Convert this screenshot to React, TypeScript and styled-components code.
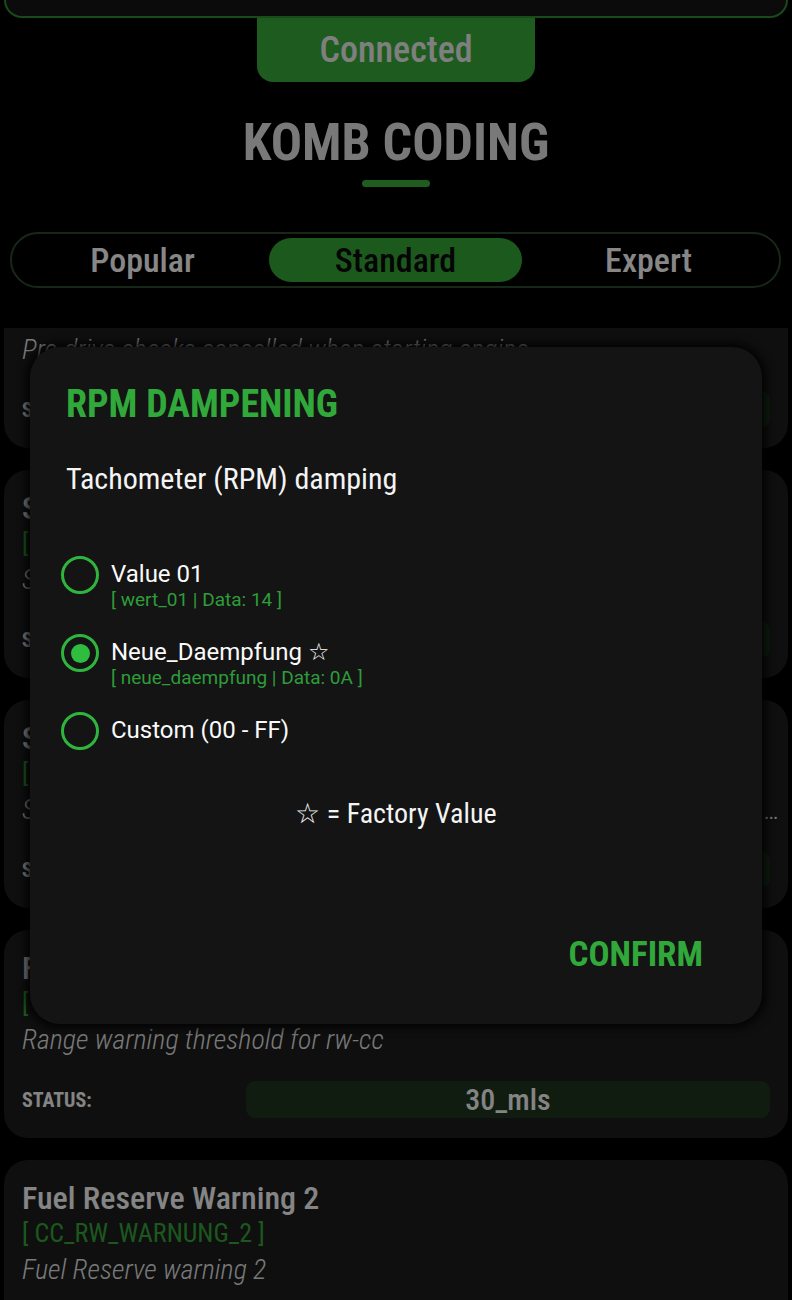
import React from 'react';
import styled, { createGlobalStyle } from 'styled-components';

const display = `Roboto, "Noto Sans", sans-serif`;
const body = `Roboto, "Noto Sans", sans-serif`;

const GlobalStyle = createGlobalStyle`
    html, body {
        margin: 0;
        padding: 0;
        background: #000;
    }
    * {
        box-sizing: border-box;
    }
`;

const Page = styled.div`
    position: relative;
    width: 792px;
    height: 1300px;
    overflow: hidden;
    background: #000;
    display: flex;
    flex-direction: column;
    font-family: ${display};
    font-stretch: condensed;
`;

const HeaderCard = styled.div`
    height: 18px;
    margin: 0 4px;
    background: #151515;
    border: 2px solid #2f872f;
    border-top: none;
    border-radius: 0 0 24px 24px;
`;

const ConnectedTab = styled.div`
    align-self: center;
    width: 278px;
    height: 64px;
    background: #36a838;
    border-radius: 0 0 16px 16px;
    display: flex;
    align-items: center;
    justify-content: center;
    color: #e8e8e8;
    font-size: 36px;
    font-weight: 500;
`;

const Title = styled.h1`
    margin: 33px 0 0;
    text-align: center;
    font-size: 52px;
    line-height: 56px;
    font-weight: 700;
    color: #dcdcdc;
`;

const TitleBar = styled.div`
    align-self: center;
    width: 68px;
    height: 7px;
    margin-top: 9px;
    border-radius: 4px;
    background: #38a83a;
`;

const Tabs = styled.div`
    margin: 45px 11px 0 10px;
    height: 56px;
    border: 2px solid #2c4a2c;
    border-radius: 28px;
    display: grid;
    grid-template-columns: 1fr 1fr 1fr;
    align-items: center;
    padding: 0 4px;
`;

const Tab = styled.div<{ active?: boolean }>`
    height: 44px;
    border-radius: 22px;
    display: flex;
    align-items: center;
    justify-content: center;
    font-size: 34px;
    font-weight: 500;
    color: ${p => (p.active ? '#0a0a0a' : '#f6f6f6')};
    background: ${p => (p.active ? '#34a236' : 'transparent')};
`;

const ListViewport = styled.div`
    margin-top: 40px;
    flex: 1;
    overflow: hidden;
`;

const ListInner = styled.div`
    margin-top: -88px;
    display: flex;
    flex-direction: column;
    gap: 22px;
`;

const Card = styled.div`
    margin: 0 4px;
    height: 208px;
    padding: 20px 18px;
    background: #1c1c1c;
    border-radius: 24px;
    display: flex;
    flex-direction: column;
`;

const CardTitle = styled.div`
    font-size: 32px;
    line-height: 36px;
    font-weight: 500;
    color: #f2f2f2;
`;

const CardCode = styled.div`
    font-size: 26px;
    line-height: 34px;
    color: #34a036;
`;

const CardDesc = styled.div`
    margin-right: -16px;
    font-size: 28px;
    line-height: 40px;
    font-style: italic;
    font-weight: 300;
    color: #dcdcdc;
    white-space: nowrap;
    overflow: hidden;
    text-overflow: ellipsis;
`;

const StatusRow = styled.div`
    margin-top: 25px;
    display: flex;
    align-items: center;
`;

const StatusLabel = styled.div`
    width: 224px;
    font-size: 20px;
    font-weight: 700;
    color: #f0f0f0;
`;

const StatusValue = styled.div`
    flex: 1;
    height: 37px;
    border-radius: 9px;
    background: #1c331d;
    display: flex;
    align-items: center;
    justify-content: center;
    font-size: 30px;
    font-weight: 500;
    color: #f0f0f0;
`;

const Scrim = styled.div`
    position: absolute;
    inset: 0;
    background: rgba(0, 0, 0, 0.45);
`;

const Dialog = styled.div`
    position: absolute;
    left: 30px;
    top: 347px;
    width: 732px;
    height: 677px;
    padding: 35px 36px 48px;
    background: #141414;
    border-radius: 30px;
    box-shadow: 0 0 10px 4px rgba(0, 0, 0, 0.85);
    display: flex;
    flex-direction: column;
`;

const DialogTitle = styled.h2`
    margin: 0;
    font-size: 38px;
    line-height: 44px;
    font-weight: 700;
    color: #31a83a;
`;

const DialogText = styled.div`
    margin-top: 35px;
    font-size: 30px;
    line-height: 36px;
    color: #f4f4f4;
`;

const Options = styled.div`
    margin: 62px 0 0 -5px;
    display: flex;
    flex-direction: column;
    gap: 26px;
`;

const Option = styled.div`
    display: flex;
    align-items: flex-start;
    gap: 12px;
`;

const Radio = styled.div<{ checked?: boolean }>`
    width: 38px;
    height: 38px;
    margin-top: -3px;
    flex-shrink: 0;
    border-radius: 50%;
    border: 3.5px solid #2fb53e;
    display: flex;
    align-items: center;
    justify-content: center;

    &::after {
        content: '';
        width: 19px;
        height: 19px;
        border-radius: 50%;
        background: #2fbd40;
        display: ${p => (p.checked ? 'block' : 'none')};
    }
`;

const OptionText = styled.div`
    display: flex;
    flex-direction: column;
    font-family: ${body};
    font-stretch: normal;
`;

const OptionLabel = styled.div`
    font-size: 24px;
    line-height: 30px;
    color: #fafafa;
`;

const OptionSub = styled.div`
    font-size: 19px;
    line-height: 22px;
    color: #2e9c3a;
`;

const Legend = styled.div`
    margin-top: 46px;
    text-align: center;
    font-size: 28px;
    line-height: 36px;
    color: #f4f4f4;
`;

const GlowLine = styled.div`
    margin: 43px 2px 0;
    height: 3px;
    border-radius: 2px;
    background: linear-gradient(90deg, rgba(46, 170, 58, 0.05), #3cc04a 50%, rgba(46, 170, 58, 0.05));
`;

const ConfirmButton = styled.button`
    align-self: flex-end;
    margin: 58px 23px 0 0;
    padding: 0;
    border: none;
    background: none;
    font-family: ${display};
    font-stretch: condensed;
    font-size: 35px;
    line-height: 44px;
    font-weight: 700;
    color: #30a83a;
`;

const cards = [
    {
        title: 'Pre-Drive Check',
        code: '[ CC_VORFAHRT_CHECK ]',
        desc: 'Pre-drive checks cancelled when starting engine',
        status: 'aktiv'
    },
    {
        title: 'Seatbelt Warning',
        code: '[ GURTWARNUNG ]',
        desc: 'Seatbelt warning chime on driver side',
        status: 'aktiv'
    },
    {
        title: 'Service Interval Display',
        code: '[ SIA_ANZEIGE ]',
        desc: 'Service interval display in instrument cluster when ignition is switched on',
        status: 'nicht_aktiv'
    },
    {
        title: 'Fuel Reserve Warning',
        code: '[ CC_RW_WARNUNG ]',
        desc: 'Range warning threshold for rw-cc',
        status: '30_mls'
    },
    {
        title: 'Fuel Reserve Warning 2',
        code: '[ CC_RW_WARNUNG_2 ]',
        desc: 'Fuel Reserve warning 2',
        status: 'aktiv'
    }
];

const options = [
    { label: 'Value 01', sub: '[ wert_01 | Data: 14 ]', checked: false },
    { label: 'Neue_Daempfung ☆', sub: '[ neue_daempfung | Data: 0A ]', checked: true },
    { label: 'Custom (00 - FF)', sub: '', checked: false }
];

const App: React.FC = () => {
    return (
        <Page>
            <GlobalStyle />
            <HeaderCard />
            <ConnectedTab>Connected</ConnectedTab>
            <Title>KOMB CODING</Title>
            <TitleBar />
            <Tabs>
                <Tab>Popular</Tab>
                <Tab active>Standard</Tab>
                <Tab>Expert</Tab>
            </Tabs>
            <ListViewport>
                <ListInner>
                    {cards.map((card, index) => (
                        <Card key={index}>
                            <CardTitle>{card.title}</CardTitle>
                            <CardCode>{card.code}</CardCode>
                            <CardDesc>{card.desc}</CardDesc>
                            <StatusRow>
                                <StatusLabel>STATUS:</StatusLabel>
                                <StatusValue>{card.status}</StatusValue>
                            </StatusRow>
                        </Card>
                    ))}
                </ListInner>
            </ListViewport>
            <Scrim />
            <Dialog>
                <DialogTitle>RPM DAMPENING</DialogTitle>
                <DialogText>Tachometer (RPM) damping</DialogText>
                <Options>
                    {options.map((option, index) => (
                        <Option key={index}>
                            <Radio checked={option.checked} />
                            <OptionText>
                                <OptionLabel>{option.label}</OptionLabel>
                                {option.sub && <OptionSub>{option.sub}</OptionSub>}
                            </OptionText>
                        </Option>
                    ))}
                </Options>
                <Legend>☆ = Factory Value</Legend>
                <GlowLine />
                <ConfirmButton>CONFIRM</ConfirmButton>
            </Dialog>
        </Page>
    );
};

export default App;
